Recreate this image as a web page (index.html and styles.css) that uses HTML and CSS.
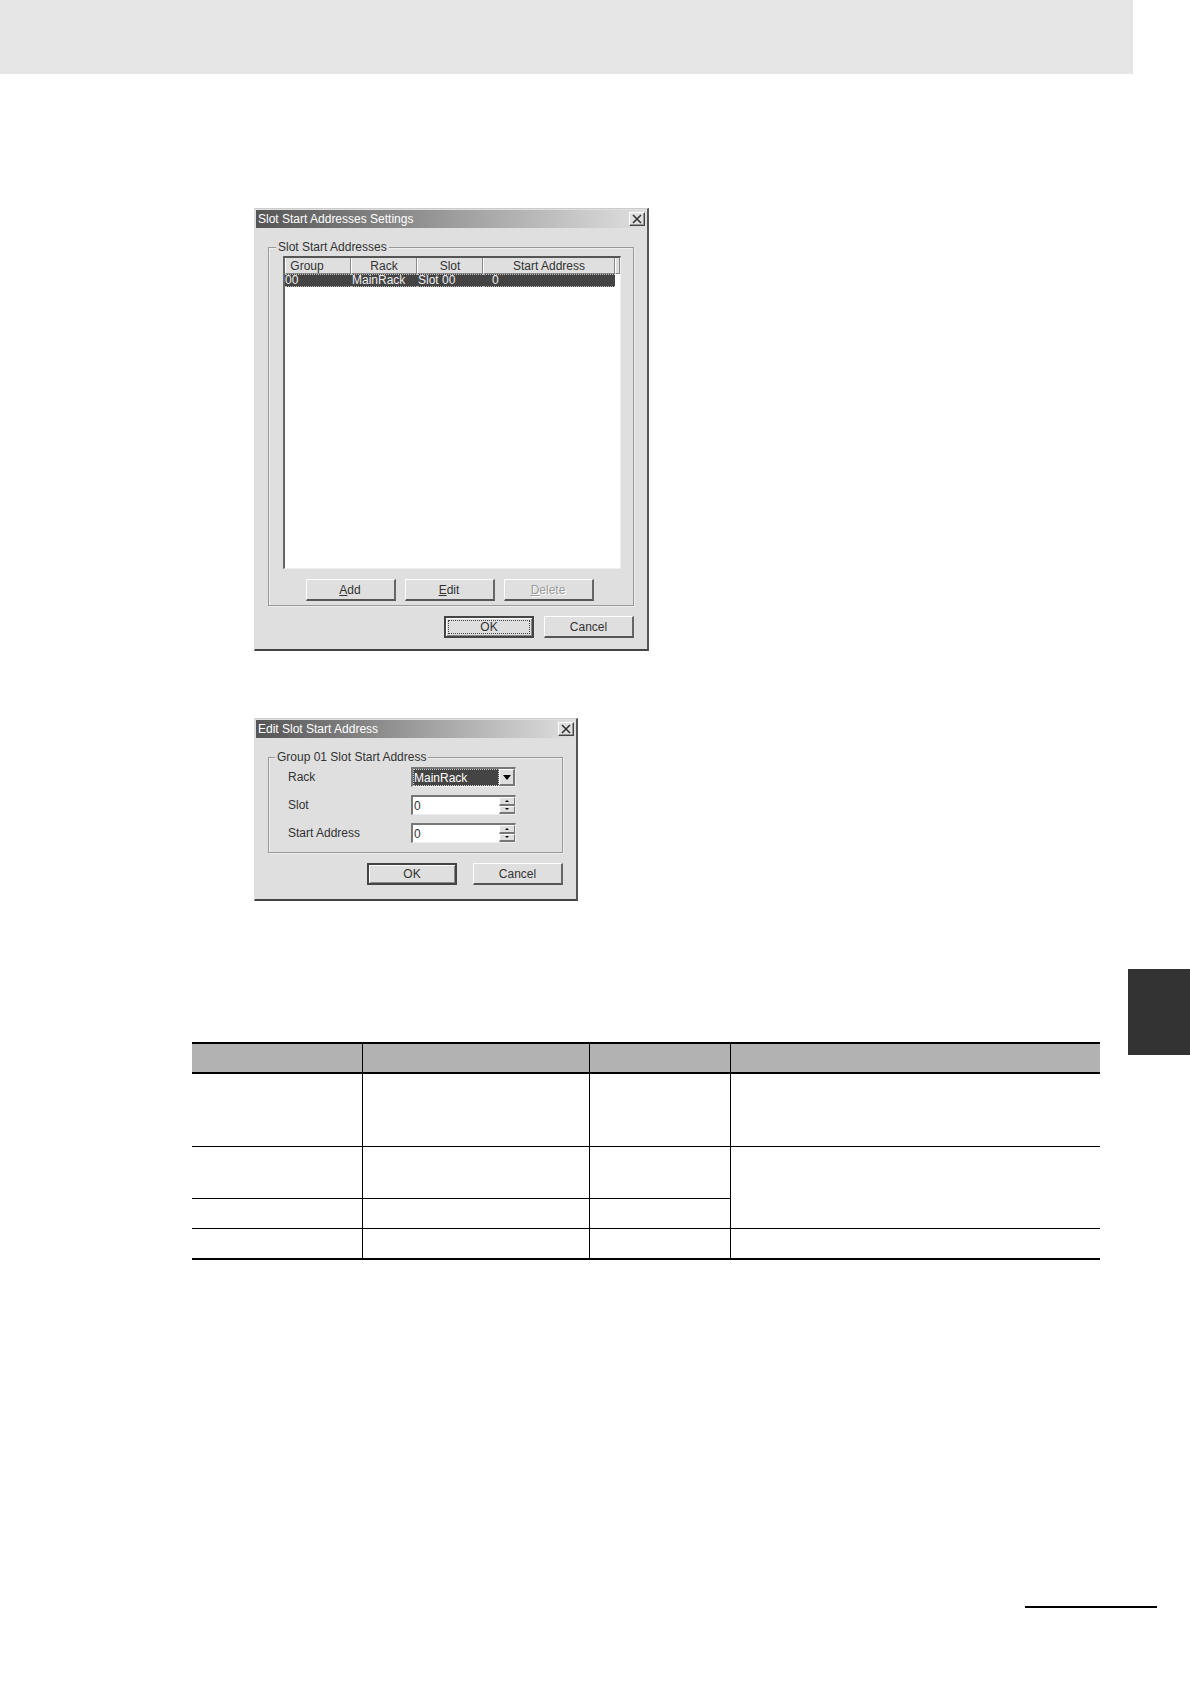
FILE: index.html
```html
<!DOCTYPE html>
<html lang="en">
<head>
    <meta charset="UTF-8">
    <meta name="viewport" content="width=device-width, initial-scale=1.0">
    <title>Slot Start Addresses</title>
    <link rel="stylesheet" href="styles.css">
</head>
<body>
    <header class="page-header"></header>
    <main class="page">
        <form class="dialog dialog-settings">
            <div class="title-bar">
                <span>Slot Start Addresses Settings</span>
                <button type="button" class="close-btn" aria-label="Close">
                    <svg width="10" height="10" viewBox="0 0 10 10"><path d="M1 1l8 8M9 1l-8 8"/></svg>
                </button>
            </div>
            <div class="dialog-body">
                <fieldset class="group list-group">
                    <legend>Slot Start Addresses</legend>
                    <div class="list-box">
                        <table class="slot-table">
                            <colgroup>
                                <col class="col-group">
                                <col class="col-rack">
                                <col class="col-slot">
                                <col>
                                <col class="col-rest">
                            </colgroup>
                            <thead>
                                <tr><th class="group-head">Group</th><th>Rack</th><th>Slot</th><th>Start Address</th><th></th></tr>
                            </thead>
                            <tbody>
                                <tr class="selected"><td>00</td><td>MainRack</td><td>Slot 00</td><td class="address">0</td></tr>
                            </tbody>
                        </table>
                    </div>
                    <div class="list-actions">
                        <button type="button" class="btn"><u>A</u>dd</button>
                        <button type="button" class="btn"><u>E</u>dit</button>
                        <button type="button" class="btn" disabled><u>D</u>elete</button>
                    </div>
                </fieldset>
                <div class="dialog-actions">
                    <button type="button" class="btn default focused"><span>OK</span></button>
                    <button type="button" class="btn">Cancel</button>
                </div>
            </div>
        </form>

        <form class="dialog dialog-edit">
            <div class="title-bar">
                <span>Edit Slot Start Address</span>
                <button type="button" class="close-btn" aria-label="Close">
                    <svg width="10" height="10" viewBox="0 0 10 10"><path d="M1 1l8 8M9 1l-8 8"/></svg>
                </button>
            </div>
            <div class="dialog-body">
                <fieldset class="group form-group">
                    <legend>Group 01 Slot Start Address</legend>
                    <label for="rack">Rack</label>
                    <div class="field">
                        <select id="rack"><option>MainRack</option></select>
                        <span class="drop-arrow"><svg width="8" height="5" viewBox="0 0 8 5"><path d="M0 0h8L4 5z"/></svg></span>
                    </div>
                    <label for="slot">Slot</label>
                    <div class="field">
                        <input type="text" id="slot" value="0">
                        <div class="spinner">
                            <button type="button" aria-label="Slot up"><svg width="4" height="2" viewBox="0 0 4 2"><path d="M0 2h4L2 0z"/></svg></button>
                            <button type="button" aria-label="Slot down"><svg width="4" height="2" viewBox="0 0 4 2"><path d="M0 0h4L2 2z"/></svg></button>
                        </div>
                    </div>
                    <label for="address">Start Address</label>
                    <div class="field">
                        <input type="text" id="address" value="0">
                        <div class="spinner">
                            <button type="button" aria-label="Address up"><svg width="4" height="2" viewBox="0 0 4 2"><path d="M0 2h4L2 0z"/></svg></button>
                            <button type="button" aria-label="Address down"><svg width="4" height="2" viewBox="0 0 4 2"><path d="M0 0h4L2 2z"/></svg></button>
                        </div>
                    </div>
                </fieldset>
                <div class="dialog-actions">
                    <button type="button" class="btn default">OK</button>
                    <button type="button" class="btn">Cancel</button>
                </div>
            </div>
        </form>

        <section class="reference">
            <table class="ref-table">
                <colgroup>
                    <col class="ref-item">
                    <col class="ref-set">
                    <col class="ref-default">
                    <col>
                </colgroup>
                <thead>
                    <tr><th></th><th></th><th></th><th></th></tr>
                </thead>
                <tbody>
                    <tr class="tall"><td></td><td></td><td></td><td></td></tr>
                    <tr class="medium"><td></td><td></td><td></td><td rowspan="2"></td></tr>
                    <tr><td></td><td></td><td></td></tr>
                    <tr class="last"><td></td><td></td><td></td><td></td></tr>
                </tbody>
            </table>
            <div class="chapter-tab"></div>
        </section>
    </main>
    <footer class="page-footer"></footer>
</body>
</html>
```
FILE: styles.css
```css
* {
    box-sizing: border-box;
}
body {
    margin: 0;
    min-height: 100vh;
    display: flex;
    flex-direction: column;
    background: #fff;
    color: #333;
    font-family: "Liberation Sans", Arial, sans-serif;
    font-size: 12px;
    line-height: 14px;
}
.page-header {
    height: 74px;
    margin-right: 57px;
    background: #e6e6e6;
}
.page {
    flex: 1;
    padding-top: 134px;
}
.dialog {
    margin-left: 254px;
    padding: 1px;
    background: #dfdfdf;
    border: solid #dfdfdf;
    border-width: 1px 2px 2px 1px;
    border-color: #ccc #555 #444 #dfdfdf;
}
.dialog-settings {
    width: 395px;
}
.dialog-edit {
    width: 324px;
    margin-top: 67px;
}
.title-bar {
    display: flex;
    justify-content: space-between;
    align-items: center;
    height: 18px;
    padding: 0 1px 0 2px;
    background: linear-gradient(to right, #555, #9c9c9c 50%, #dfdfdf);
    color: #fff;
}
.close-btn {
    display: flex;
    align-items: center;
    justify-content: center;
    width: 16px;
    height: 14px;
    padding: 0;
    background: #dfdfdf;
    border: 1px solid;
    border-color: #fff #444 #444 #fff;
    box-shadow: inset -1px -1px #999;
}
.close-btn svg {
    fill: none;
    stroke: #333;
    stroke-width: 1.6;
}
.dialog-body {
    padding: 12px 12px 10px;
}
.dialog-edit .dialog-body {
    padding-bottom: 13px;
}
.group {
    margin: 0;
    min-width: 0;
    border: 1px solid #999;
    box-shadow: 1px 1px #eee, inset 1px 1px #eee;
}
.group legend {
    padding: 0 2px;
    margin-left: -7px;
    background: #dfdfdf;
}
.list-group {
    padding: 2px 12px 4px 14px;
}
.list-box {
    height: 313px;
    background: #fff;
    border: solid;
    border-width: 2px 1px 1px 2px;
    border-color: #555 #eee #eee #666;
}
.slot-table {
    width: 100%;
    table-layout: fixed;
    border-collapse: separate;
    border-spacing: 0;
}
.slot-table th {
    height: 16px;
    padding: 0;
    background: #dfdfdf;
    border: solid;
    border-width: 0 1px 1px 1px;
    border-color: #fff #888 #888 #fff;
    font-weight: normal;
    line-height: 14px;
}
.slot-table .group-head {
    padding-right: 22px;
}
.slot-table td {
    height: 13px;
    padding: 0 1px;
    line-height: 11px;
}
.slot-table td:first-child {
    padding-left: 0;
}
.slot-table .address {
    padding-left: 9px;
}
.selected td {
    background: #444;
    color: #eee;
    border: dotted #bbb;
    border-width: 1px 0;
}
.col-group, .col-rack, .col-slot {
    width: 66px;
}
.col-rest {
    width: 5px;
}
.list-actions {
    display: flex;
    justify-content: center;
    gap: 9px;
    margin-top: 10px;
    padding-right: 5px;
}
.btn {
    width: 90px;
    height: 22px;
    padding: 0;
    background: #dfdfdf;
    border: solid;
    border-width: 1px 2px 2px 1px;
    border-color: #fff #666 #555 #fff;
    color: #333;
    font: inherit;
}
.btn:disabled {
    color: #999;
    text-shadow: 1px 1px #fff;
}
.btn.default {
    border: 2px solid #444;
    box-shadow: inset 1px 1px #fff, inset -1px -1px #888;
}
.focused span {
    display: block;
    margin: 0 2px;
    border: 1px dotted #444;
    line-height: 12px;
}
.dialog-actions {
    display: flex;
    justify-content: flex-end;
    gap: 10px;
    margin-top: 10px;
}
.dialog-edit .dialog-actions {
    gap: 16px;
}
.form-group {
    display: grid;
    grid-template-columns: 123px 105px;
    align-items: center;
    gap: 8px 0;
    padding: 3px 0 9px 19px;
}
.form-group legend {
    margin-left: -13px;
}
.field {
    display: flex;
    height: 20px;
    background: #fff;
    border: solid;
    border-width: 2px 1px 1px 2px;
    border-color: #777 #eee #eee #777;
}
.field select, .field input {
    flex: 1;
    min-width: 0;
    padding: 0 1px;
    background: #fff;
    border: 0;
    border-radius: 0;
    color: #333;
    font: inherit;
    appearance: none;
}
.field select {
    padding: 0;
    background: #444;
    border: 1px dotted #ccc;
    color: #fff;
}
.drop-arrow, .spinner button {
    display: flex;
    align-items: center;
    justify-content: center;
    width: 16px;
    padding: 0;
    background: #dfdfdf;
    border: solid;
    border-width: 1px 2px 2px 1px;
    border-color: #fff #777 #777 #fff;
}
.spinner {
    display: grid;
    grid-template-rows: 1fr 1fr;
}
.spinner button {
    min-height: 0;
    border-width: 1px 1px 2px 1px;
}
.reference {
    display: grid;
    grid-template-columns: minmax(0, 1fr) 62px;
    align-items: start;
    gap: 28px;
    margin-top: 68px;
    padding-left: 192px;
}
.chapter-tab {
    height: 86px;
    background: #333;
}
.ref-table {
    width: 100%;
    margin-top: 73px;
    table-layout: fixed;
    border-collapse: separate;
    border-spacing: 0;
}
.ref-table th, .ref-table td {
    height: 30px;
    padding: 0;
    border-bottom: 1px solid #000;
}
.ref-table th {
    height: 32px;
    background: #b2b2b2;
    border-top: 2px solid #000;
    border-bottom-width: 2px;
}
.ref-table th + th, .ref-table td + td {
    border-left: 1px solid #000;
}
.ref-table .tall td {
    height: 73px;
}
.ref-table .medium td {
    height: 52px;
}
.ref-table .last td {
    height: 31px;
    border-bottom-width: 2px;
}
.ref-item {
    width: 18.7%;
}
.ref-set {
    width: 25%;
}
.ref-default {
    width: 15.6%;
}
.page-footer {
    align-self: flex-end;
    width: 132px;
    margin: 0 33px 76px 0;
    border-top: 2px solid #000;
}
```
